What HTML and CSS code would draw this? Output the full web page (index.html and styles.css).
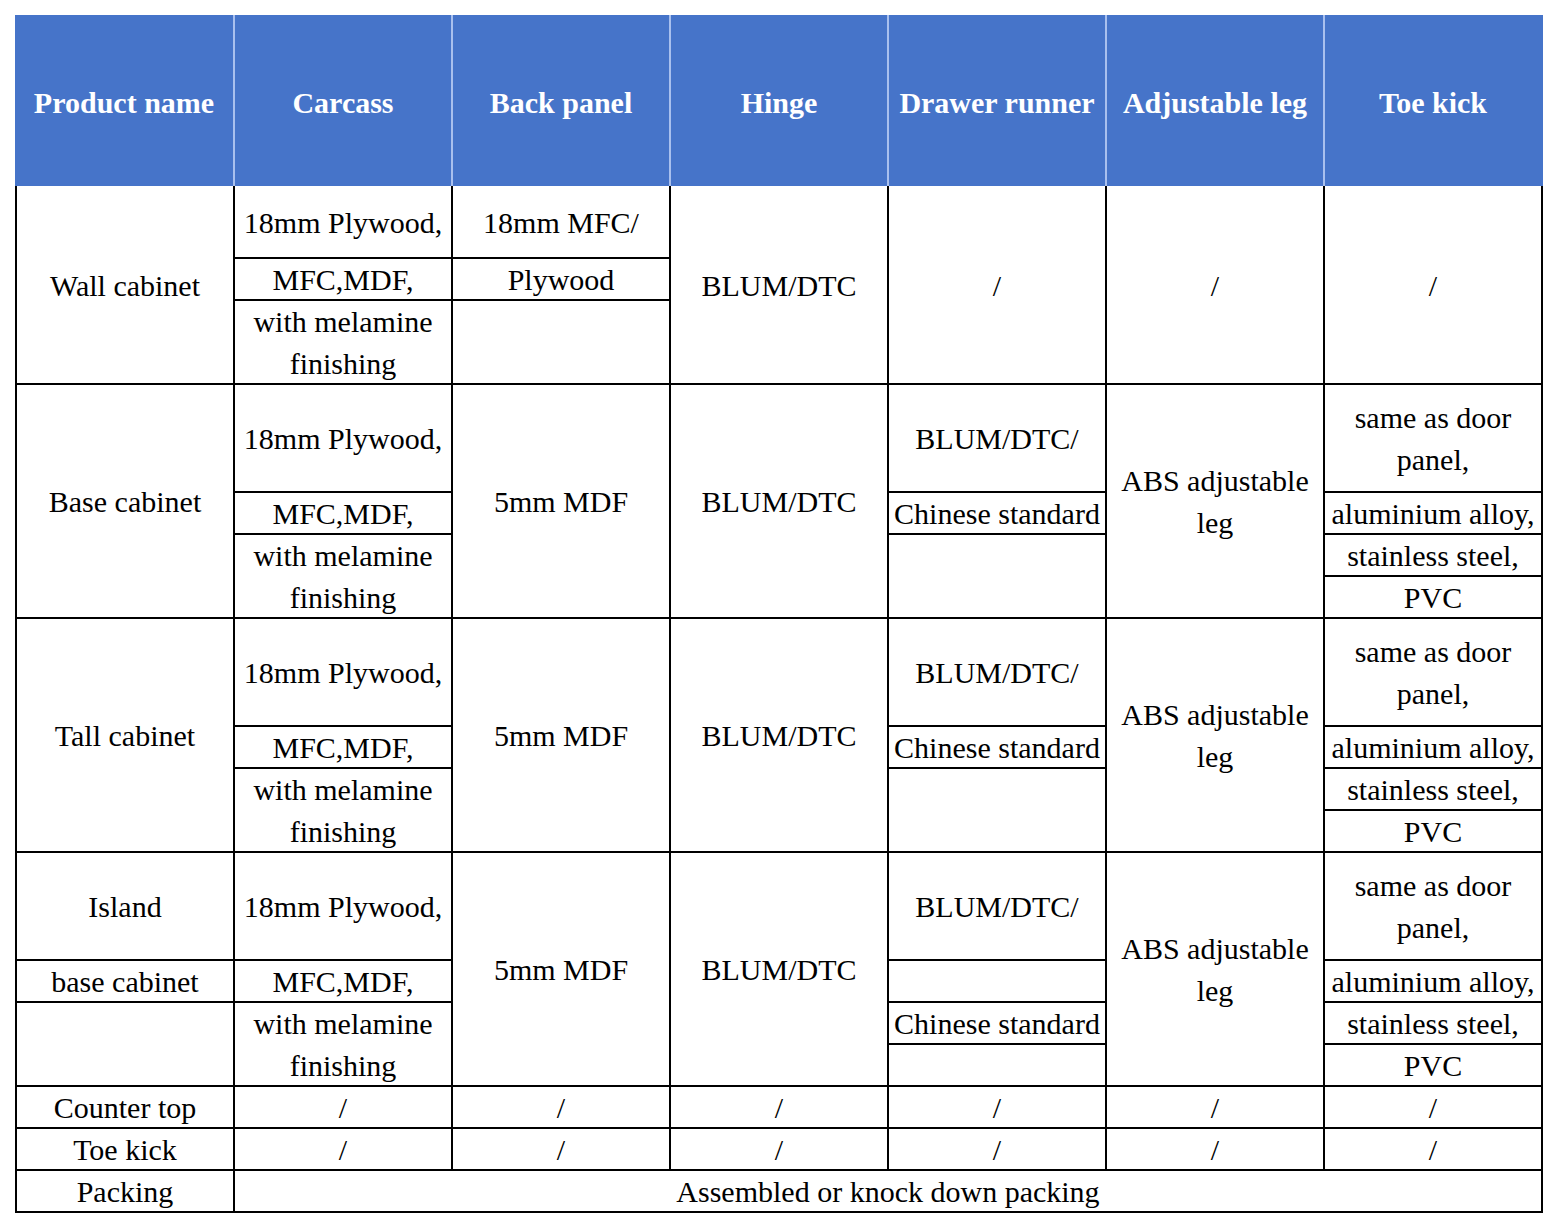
FILE: index.html
```html
<!DOCTYPE html>
<html>
<head>
<meta charset="utf-8">
<link rel="stylesheet" href="styles.css">
</head>
<body>
<div class="sheet">
  <div class="head">
    <div class="hc">Product name</div>
    <div class="hc sep">Carcass</div>
    <div class="hc sep">Back panel</div>
    <div class="hc sep">Hinge</div>
    <div class="hc sep">Drawer runner</div>
    <div class="hc sep">Adjustable leg</div>
    <div class="hc sep last">Toe kick</div>
  </div>
  <div class="body">
    <!-- Wall cabinet -->
    <div class="c r4">Wall cabinet</div>
    <div class="c">18mm Plywood,</div>
    <div class="c">18mm MFC/</div>
    <div class="c r4">BLUM/DTC</div>
    <div class="c r4">/</div>
    <div class="c r4">/</div>
    <div class="c r4">/</div>
    <div class="c">MFC,MDF,</div>
    <div class="c">Plywood</div>
    <div class="c r2">with melamine<br>finishing</div>
    <div class="c r2"></div>

    <!-- Base cabinet -->
    <div class="c r4">Base cabinet</div>
    <div class="c">18mm Plywood,</div>
    <div class="c r4">5mm MDF</div>
    <div class="c r4">BLUM/DTC</div>
    <div class="c">BLUM/DTC/</div>
    <div class="c r4">ABS adjustable<br>leg</div>
    <div class="c">same as door<br>panel,</div>
    <div class="c">MFC,MDF,</div>
    <div class="c">Chinese standard</div>
    <div class="c">aluminium alloy,</div>
    <div class="c r2">with melamine<br>finishing</div>
    <div class="c r2"></div>
    <div class="c">stainless steel,</div>
    <div class="c">PVC</div>

    <!-- Tall cabinet -->
    <div class="c r4">Tall cabinet</div>
    <div class="c">18mm Plywood,</div>
    <div class="c r4">5mm MDF</div>
    <div class="c r4">BLUM/DTC</div>
    <div class="c">BLUM/DTC/</div>
    <div class="c r4">ABS adjustable<br>leg</div>
    <div class="c">same as door<br>panel,</div>
    <div class="c">MFC,MDF,</div>
    <div class="c">Chinese standard</div>
    <div class="c">aluminium alloy,</div>
    <div class="c r2">with melamine<br>finishing</div>
    <div class="c r2"></div>
    <div class="c">stainless steel,</div>
    <div class="c">PVC</div>

    <!-- Island -->
    <div class="c">Island</div>
    <div class="c">18mm Plywood,</div>
    <div class="c r4">5mm MDF</div>
    <div class="c r4">BLUM/DTC</div>
    <div class="c">BLUM/DTC/</div>
    <div class="c r4">ABS adjustable<br>leg</div>
    <div class="c">same as door<br>panel,</div>
    <div class="c">base cabinet</div>
    <div class="c">MFC,MDF,</div>
    <div class="c"></div>
    <div class="c">aluminium alloy,</div>
    <div class="c r2"></div>
    <div class="c r2">with melamine<br>finishing</div>
    <div class="c">Chinese standard</div>
    <div class="c">stainless steel,</div>
    <div class="c"></div>
    <div class="c">PVC</div>

    <!-- Counter top -->
    <div class="c">Counter top</div>
    <div class="c">/</div>
    <div class="c">/</div>
    <div class="c">/</div>
    <div class="c">/</div>
    <div class="c">/</div>
    <div class="c">/</div>

    <!-- Toe kick -->
    <div class="c">Toe kick</div>
    <div class="c">/</div>
    <div class="c">/</div>
    <div class="c">/</div>
    <div class="c">/</div>
    <div class="c">/</div>
    <div class="c">/</div>

    <!-- Packing -->
    <div class="c">Packing</div>
    <div class="c c6">Assembled or knock down packing</div>
  </div>
</div>
</body>
</html>
```

FILE: styles.css
```css
html, body {
  margin: 0;
  padding: 0;
  background: #ffffff;
}

body {
  padding: 15px;
  font-family: "Liberation Serif", "Times New Roman", serif;
  font-size: 30px;
  color: #000000;
}

.sheet {
  width: 1528px;
}

.head {
  display: grid;
  grid-template-columns: repeat(6, 218px) 220px;
  height: 171px;
  background: #4674c9;
}

.hc {
  display: flex;
  align-items: center;
  justify-content: center;
  color: #ffffff;
  font-weight: bold;
  white-space: nowrap;
  padding-top: 4px;
  box-sizing: border-box;
}

.hc.sep {
  border-left: 2px solid #a9c0ee;
}

.hc.last {
  padding-right: 2px;
}

.body {
  display: grid;
  grid-template-columns: repeat(7, 216px);
  grid-template-rows:
    71px 40px 40px 40px
    106px 40px 40px 40px
    106px 40px 40px 40px
    106px 40px 40px 40px
    40px 40px 40px;
  gap: 2px;
  padding: 0 2px 2px 2px;
  background: #000000;
}

.c {
  background: #ffffff;
  display: flex;
  align-items: center;
  justify-content: center;
  text-align: center;
  white-space: nowrap;
  line-height: 42px;
  padding-top: 2px;
  box-sizing: border-box;
}

.r2 {
  grid-row: span 2;
}

.r4 {
  grid-row: span 4;
}

.c6 {
  grid-column: span 6;
}
```
